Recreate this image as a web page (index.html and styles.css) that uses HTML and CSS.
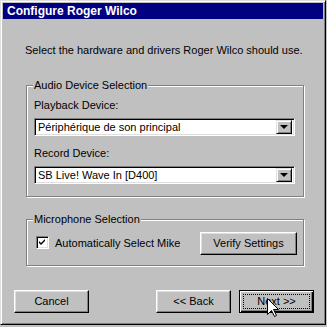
FILE: index.html
```html
<!DOCTYPE html>
<html>
	<head>
		<meta charset="UTF-8">
		<title>Configure Roger Wilco</title>
		<link rel="stylesheet" href="styles.css">
	</head>
	<body>
	  <div class="window">
	    <div class="titlebar">Configure Roger Wilco</div>
	    <div class="body">
	      <div class="intro">Select the hardware and drivers Roger Wilco should use.</div>

	      <div class="group audio">
	        <span class="group-title">Audio Device Selection</span>
	        <div class="label">Playback Device:</div>
	        <div class="combo">
	          <span class="value">Périphérique de son principal</span>
	          <span class="drop"><span class="tri"></span></span>
	        </div>
	        <div class="label">Record Device:</div>
	        <div class="combo">
	          <span class="value">SB Live! Wave In [D400]</span>
	          <span class="drop"><span class="tri"></span></span>
	        </div>
	      </div>

	      <div class="group mic">
	        <span class="group-title">Microphone Selection</span>
	        <div class="check">
	          <span class="box">
	            <svg width="7" height="7" viewBox="0 0 7 7"><path d="M0 2 L2 4 L6 0 L6 2 L2 6 L0 4 Z" fill="#000"/></svg>
	          </span>
	          <span>Automatically Select Mike</span>
	        </div>
	        <div class="btn verify">Verify Settings</div>
	      </div>

	      <div class="actions">
	        <div class="btn">Cancel</div>
	        <div class="btn back">&lt;&lt; Back</div>
	        <div class="btn default"><span class="focus">Next &gt;&gt;</span></div>
	      </div>
	    </div>
	    <svg class="cursor" width="12" height="20" viewBox="0 0 12 20">
	      <path d="M0.5 0.5 L0.5 16.5 L4.5 12.5 L7.5 18.5 L9.5 17.5 L6.5 11.5 L11.5 11.5 Z" fill="#fff" stroke="#000" stroke-width="1"/>
	    </svg>
	  </div>
	</body>
</html>
```

FILE: styles.css
```css
html, body {
  margin: 0;
  padding: 0;
}
body {
  background: #c0c0c0;
  font-family: "Liberation Sans", Arial, sans-serif;
  font-size: 11px;
  color: #000;
  overflow: hidden;
}
.window {
  position: relative;
  width: 326px;
  height: 325px;
  box-sizing: border-box;
  border: 1px solid;
  border-color: #dfdfdf #000 #000 #dfdfdf;
  box-shadow: inset 1px 1px 0 #fff, inset -1px -1px 0 #808080;
  padding: 2px;
  display: flex;
  flex-direction: column;
}
.titlebar {
  height: 16px;
  line-height: 16px;
  background: #000080;
  color: #fff;
  font-weight: bold;
  font-size: 12px;
  padding-left: 4px;
}
.body {
  flex: 1;
  display: flex;
  flex-direction: column;
  padding: 0 9px 0 11px;
}
.intro {
  margin: 25px 0 0 11px;
  line-height: 13px;
}
.group {
  position: relative;
  box-sizing: border-box;
  margin: 0 10px 0 12px;
  border: 1px solid #808080;
  box-shadow: inset 1px 1px 0 #fff, 1px 1px 0 #fff;
}
.group-title {
  position: absolute;
  top: -7px;
  left: 6px;
  padding: 0 1px;
  line-height: 13px;
  background: #c0c0c0;
}
.audio {
  margin-top: 28px;
  height: 112px;
  padding: 13px 8px 0 7px;
}
.label {
  line-height: 13px;
  margin-bottom: 6px;
}
.combo {
  height: 18px;
  box-sizing: border-box;
  display: flex;
  align-items: center;
  background: #fff;
  border: 1px solid;
  border-color: #808080 #fff #fff #808080;
  box-shadow: inset 1px 1px 0 #000, inset -1px -1px 0 #dfdfdf;
  padding: 2px;
  margin-bottom: 11px;
}
.value {
  flex: 1;
  padding-left: 1px;
  line-height: 13px;
}
.drop {
  width: 16px;
  height: 14px;
  box-sizing: border-box;
  background: #c0c0c0;
  border: 1px solid;
  border-color: #dfdfdf #000 #000 #dfdfdf;
  box-shadow: inset 1px 1px 0 #fff, inset -1px -1px 0 #808080;
  display: flex;
  align-items: center;
  justify-content: center;
}
.tri {
  width: 0;
  height: 0;
  border-left: 4px solid transparent;
  border-right: 4px solid transparent;
  border-top: 4px solid #000;
}
.mic {
  margin-top: 22px;
  height: 47px;
  padding: 12px 6px 0 9px;
  display: flex;
  justify-content: space-between;
  align-items: flex-start;
}
.check {
  display: flex;
  align-items: center;
  gap: 6px;
  margin-top: 4px;
}
.box {
  width: 13px;
  height: 13px;
  box-sizing: border-box;
  background: #fff;
  border: 1px solid;
  border-color: #808080 #fff #fff #808080;
  box-shadow: inset 1px 1px 0 #000, inset -1px -1px 0 #dfdfdf;
  display: flex;
  align-items: center;
  justify-content: center;
}
.btn {
  width: 75px;
  height: 23px;
  box-sizing: border-box;
  background: #c0c0c0;
  border: 1px solid;
  border-color: #fff #000 #000 #fff;
  box-shadow: inset -1px -1px 0 #808080, inset 1px 1px 0 #dfdfdf;
  display: flex;
  align-items: center;
  justify-content: center;
  line-height: 13px;
}
.verify {
  width: 97px;
}
.actions {
  margin-top: 24px;
  display: flex;
}
.back {
  margin-left: auto;
  margin-right: 8px;
}
.default {
  border: 1px solid #000;
  box-shadow: inset 1px 1px 0 #fff, inset -1px -1px 0 #000, inset -2px -2px 0 #808080;
}
.focus {
  display: flex;
  align-items: center;
  justify-content: center;
  width: 67px;
  height: 15px;
  box-sizing: border-box;
  border: 1px dotted #000;
}
.cursor {
  position: absolute;
  left: 266px;
  top: 297px;
}
```
